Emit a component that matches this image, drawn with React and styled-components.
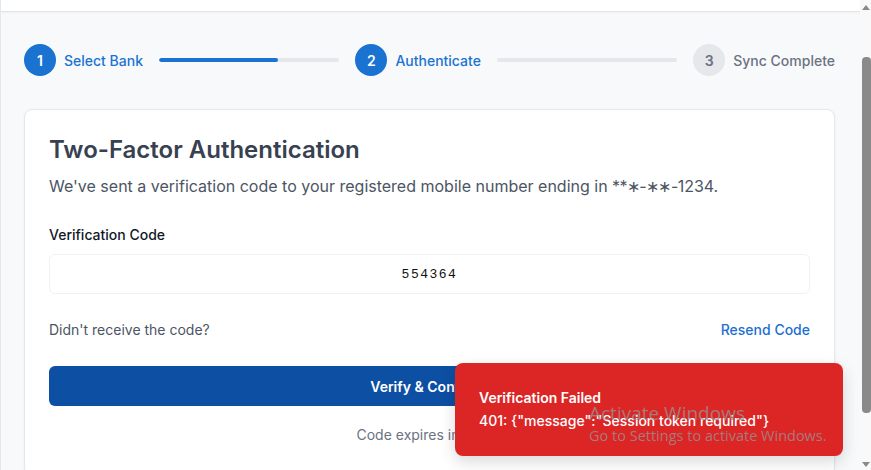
import React from 'react';
import styled, { createGlobalStyle } from 'styled-components';

const GlobalStyle = createGlobalStyle`
  html, body {
    margin: 0;
    padding: 0;
    height: 100%;
    overflow: hidden;
  }
  body {
    font-family: Inter, "Noto Sans", sans-serif;
    -webkit-font-smoothing: antialiased;
  }
  * { box-sizing: border-box; }
`;

const steps = [
  { n: 1, label: 'Select Bank', state: 'active' },
  { n: 2, label: 'Authenticate', state: 'active' },
  { n: 3, label: 'Sync Complete', state: 'idle' },
];

const bars = [66, 0];

export default function App() {
  return (
    <Page>
      <GlobalStyle />
      <Main>
        <TopBar />
        <Content>
          <Stepper>
            {steps.map((s, i) => (
              <React.Fragment key={s.n}>
                <Step>
                  <StepCircle $active={s.state === 'active'}>{s.n}</StepCircle>
                  <StepLabel $active={s.state === 'active'}>{s.label}</StepLabel>
                </Step>
                {i < bars.length && (
                  <Bar>
                    <BarFill style={{ width: `${bars[i]}%` }} />
                  </Bar>
                )}
              </React.Fragment>
            ))}
          </Stepper>

          <Card>
            <Title>Two-Factor Authentication</Title>
            <Subtitle>
              We've sent a verification code to your registered mobile number ending in <Masked>**∗-∗∗-</Masked>1234.
            </Subtitle>

            <Field>
              <Label htmlFor="code">Verification Code</Label>
              <CodeInput id="code" type="text" defaultValue="554364" />
            </Field>

            <ResendRow>
              <Muted>Didn't receive the code?</Muted>
              <LinkButton type="button">Resend Code</LinkButton>
            </ResendRow>

            <PrimaryButton type="button">Verify &amp; Continue</PrimaryButton>
            <Expiry>Code expires in 04:59</Expiry>
          </Card>
        </Content>

        <Toast role="alert">
          <ToastTitle>Verification Failed</ToastTitle>
          <ToastText>401: {'{"message":"Session token required"}'}</ToastText>
        </Toast>

        <Watermark>
          <WatermarkTitle>Activate Windows</WatermarkTitle>
          <WatermarkText>Go to Settings to activate Windows.</WatermarkText>
        </Watermark>
      </Main>

      <ScrollTrack>
        <ArrowUp />
        <Thumb />
        <ArrowDown />
      </ScrollTrack>
    </Page>
  );
}

const Page = styled.div`
  display: flex;
  height: 100vh;
  width: 100vw;
`;

const Main = styled.div`
  position: relative;
  flex: 1;
  background: #f8f9fb;
  border-left: 1px solid #e6e7ea;
  overflow: hidden;
`;

const TopBar = styled.div`
  height: 12px;
  background: #fff;
  border-bottom: 1px solid #e3e5e8;
  box-shadow: 0 1px 2px rgba(0, 0, 0, 0.04);
`;

const Content = styled.div`
  padding: 32px 25px 0 23px;
`;

const Stepper = styled.div`
  display: flex;
  align-items: center;
  height: 32px;
  margin-bottom: 33px;
`;

const Step = styled.div`
  display: flex;
  align-items: center;
  gap: 8px;
  flex-shrink: 0;
`;

const StepCircle = styled.div`
  width: 32px;
  height: 32px;
  border-radius: 50%;
  display: flex;
  align-items: center;
  justify-content: center;
  font-size: 14px;
  font-weight: 600;
  background: ${p => (p.$active ? '#1a73d1' : '#e5e7eb')};
  color: ${p => (p.$active ? '#fff' : '#6b7280')};
`;

const StepLabel = styled.span`
  font-size: 14px;
  font-weight: 500;
  color: ${p => (p.$active ? '#1a73d1' : '#6b7280')};
`;

const Bar = styled.div`
  flex: 1;
  height: 4px;
  margin: 0 16px;
  background: #e5e7eb;
  border-radius: 2px;
  overflow: hidden;
`;

const BarFill = styled.div`
  height: 100%;
  background: #1a73d1;
  border-radius: 2px;
`;

const Card = styled.div`
  background: #fff;
  border: 1px solid #e5e7eb;
  border-radius: 8px;
  box-shadow: 0 1px 3px rgba(0, 0, 0, 0.05);
  padding: 24px 24px 30px 24px;
`;

const Title = styled.h1`
  margin: 0;
  font-size: 24px;
  line-height: 32px;
  font-weight: 600;
  color: #374151;
`;

const Subtitle = styled.p`
  margin: 8px 0 0;
  font-size: 16px;
  line-height: 24px;
  color: #4b5563;
`;

const Masked = styled.span`
  letter-spacing: -0.6px;
`;

const Field = styled.div`
  margin-top: 27px;
  display: flex;
  flex-direction: column;
  gap: 9px;
`;

const Label = styled.label`
  font-size: 14px;
  line-height: 20px;
  font-weight: 500;
  color: #111827;
`;

const CodeInput = styled.input`
  height: 40px;
  width: 100%;
  border: 1px solid #f0f1f3;
  border-radius: 6px;
  background: #fff;
  text-align: center;
  font-family: "Liberation Mono", "DejaVu Sans Mono", monospace;
  font-size: 13px;
  letter-spacing: 1.5px;
  color: #111;
  outline: none;
`;

const ResendRow = styled.div`
  margin-top: 26px;
  display: flex;
  align-items: center;
  justify-content: space-between;
  line-height: 20px;
`;

const Muted = styled.span`
  font-size: 14px;
  color: #4b5563;
`;

const LinkButton = styled.button`
  border: 0;
  background: none;
  padding: 0;
  font: inherit;
  font-size: 14px;
  font-weight: 500;
  color: #1d6fd1;
  cursor: pointer;
`;

const PrimaryButton = styled.button`
  display: block;
  width: 100%;
  height: 40px;
  margin-top: 26px;
  border: 0;
  border-radius: 6px;
  background: #0d4fa2;
  color: #fff;
  font-family: inherit;
  font-size: 14px;
  font-weight: 600;
  cursor: pointer;
`;

const Expiry = styled.p`
  margin: 19px 0 0;
  text-align: center;
  font-size: 14px;
  line-height: 20px;
  color: #6b7280;
`;

const Toast = styled.div`
  position: absolute;
  right: 17px;
  bottom: 14px;
  width: 388px;
  height: 93px;
  padding: 25px 24px;
  background: #dc2626;
  border-radius: 8px;
  box-shadow: 0 6px 16px rgba(0, 0, 0, 0.15);
  color: #fff;
`;

const ToastTitle = styled.div`
  font-size: 14px;
  line-height: 20px;
  font-weight: 600;
`;

const ToastText = styled.div`
  margin-top: 3px;
  font-size: 14px;
  line-height: 20px;
  font-weight: 500;
`;

const Watermark = styled.div`
  position: absolute;
  left: 588px;
  top: 400px;
  pointer-events: none;
  font-family: "Open Sans", "Noto Sans", sans-serif;
  color: rgba(150, 150, 150, 0.75);
`;

const WatermarkTitle = styled.div`
  font-size: 19px;
  line-height: 26px;
`;

const WatermarkText = styled.div`
  font-size: 14.5px;
  line-height: 20px;
`;

const ScrollTrack = styled.div`
  width: 11px;
  flex-shrink: 0;
  background: #f9f9f9;
  display: flex;
  flex-direction: column;
  align-items: flex-end;
  padding-top: 5px;
`;

const ArrowUp = styled.div`
  width: 0;
  height: 0;
  margin-right: 1px;
  border-left: 4px solid transparent;
  border-right: 4px solid transparent;
  border-bottom: 5px solid #8a8a8a;
`;

const Thumb = styled.div`
  width: 9px;
  height: 356px;
  margin-top: 47px;
  background: #8a8a8a;
  border-radius: 4px;
`;

const ArrowDown = styled.div`
  width: 0;
  height: 0;
  margin-top: 49px;
  margin-right: 1px;
  border-left: 4px solid transparent;
  border-right: 4px solid transparent;
  border-top: 5px solid #8a8a8a;
`;
